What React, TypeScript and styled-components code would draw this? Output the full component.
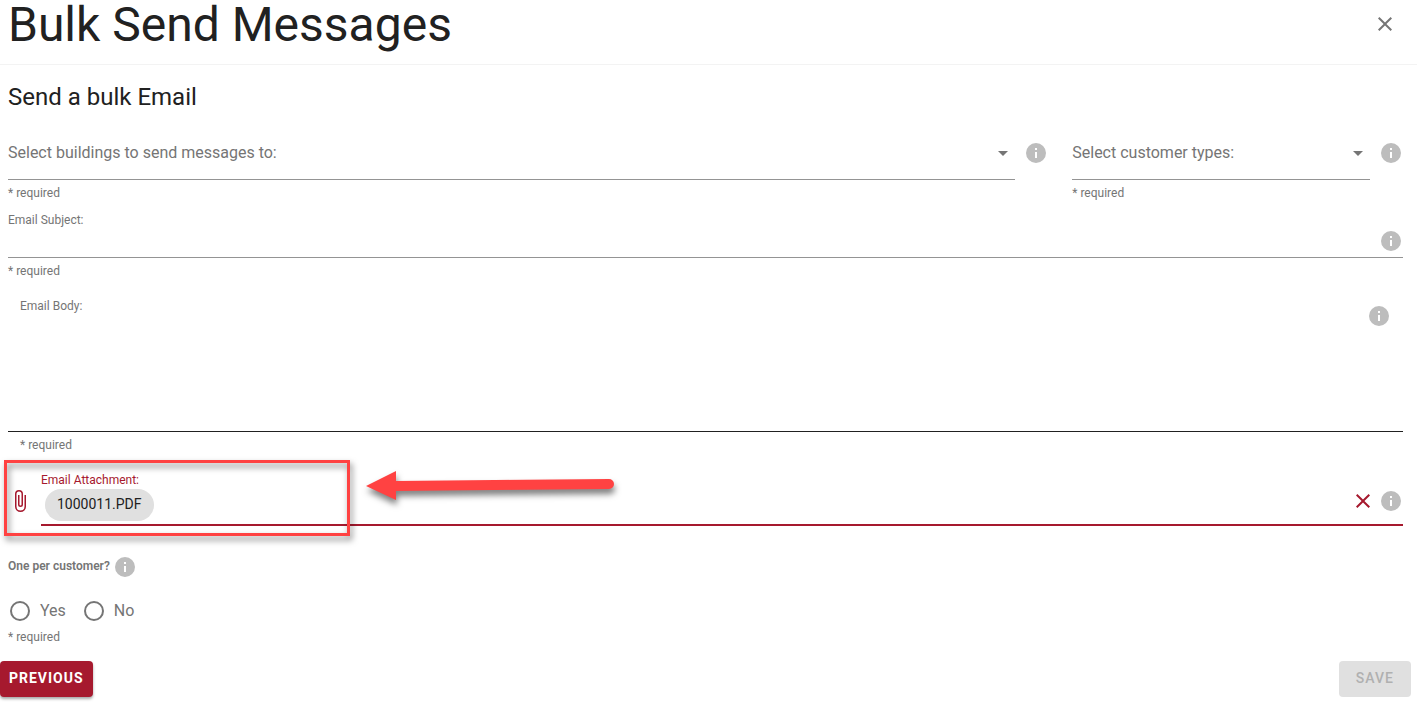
import React, { useState } from "react";
import styled, { createGlobalStyle, css } from "styled-components";

const color = {
  brand: "#a6192e",
  text: "#212121",
  muted: "#757575",
  line: "#949494",
  info: "#bdbdbd",
  chip: "#e0e0e0",
  callout: "#ff4242",
};

const GlobalStyle = createGlobalStyle`
  *, *::before, *::after { box-sizing: border-box; }
  body {
    margin: 0;
    background: #fff;
    color: ${color.text};
    font-family: Roboto, "Liberation Sans", sans-serif;
    font-size: 16px;
    line-height: 24px;
  }
  button, input, select, textarea { font: inherit; color: inherit; }
`;

const Header = styled.header`
  display: flex;
  align-items: flex-start;
  justify-content: space-between;
  padding: 0 20px 8px 8px;
  border-bottom: 1px solid #f3f3f3;
`;

const Title = styled.h1`
  margin: 0;
  padding-bottom: 6px;
  font-size: 48px;
  font-weight: 400;
  line-height: 50px;
`;

const IconButton = styled.button<{ $tone?: string }>`
  display: flex;
  padding: 0;
  border: 0;
  background: none;
  color: ${(p) => p.$tone ?? color.muted};
  cursor: pointer;
`;

const CloseButton = styled(IconButton)`
  margin-top: 12px;
`;

const Form = styled.form`
  padding-top: 16px;
`;

const Fields = styled.div`
  padding: 0 14px 0 8px;
`;

const Heading = styled.h2`
  margin: 0 0 13px;
  font-size: 24px;
  font-weight: 400;
  line-height: 32px;
`;

const Columns = styled.div`
  display: grid;
  grid-template-columns: repeat(12, 1fr);
  column-gap: 24px;
`;

const Column = styled.div<{ $span: number }>`
  grid-column: span ${(p) => p.$span};
  display: flex;
  gap: 9px;
`;

const Grow = styled.div`
  flex: 1;
  min-width: 0;
`;

const SelectBox = styled.div`
  position: relative;
  display: flex;
`;

const Select = styled.select`
  flex: 1;
  min-width: 0;
  height: 54px;
  padding: 0 24px 0 0;
  border: 0;
  border-bottom: 1px solid ${color.line};
  border-radius: 0;
  appearance: none;
  background: none;
  color: ${color.muted};
  outline: none;
`;

const Caret = styled.span`
  position: absolute;
  top: 15px;
  right: 0;
  display: flex;
  color: ${color.muted};
  pointer-events: none;
`;

const InfoSlot = styled.span`
  display: flex;
  padding-top: 15px;
`;

const smallText = css`
  font-size: 12px;
  line-height: 16px;
  color: ${color.muted};
`;

const Hint = styled.p`
  ${smallText}
  margin: 5px 0 0;
`;

const Label = styled.label<{ $active?: boolean }>`
  ${smallText}
  display: block;
  ${(p) => p.$active && `color: ${color.brand};`}
`;

const SubjectField = styled.div`
  margin-top: 11px;
`;

const SubjectRow = styled.div`
  display: flex;
  align-items: center;
  height: 30px;
  padding-bottom: 4px;
  border-bottom: 1px solid ${color.line};
`;

const TextInput = styled.input`
  flex: 1;
  min-width: 0;
  height: 24px;
  padding: 0;
  border: 0;
  background: none;
  outline: none;
`;

const BodyField = styled.div`
  margin-top: 19px;
`;

const BodyRow = styled.div`
  display: flex;
  align-items: flex-start;
  padding: 0 12px;
  border-bottom: 1px solid ${color.text};
`;

const BodyInput = styled.textarea`
  display: block;
  width: 100%;
  height: 117px;
  padding: 0;
  border: 0;
  background: none;
  outline: none;
  resize: none;
`;

const BodyInfo = styled.span`
  display: flex;
  padding-top: 6px;
`;

const BodyHint = styled(Hint)`
  padding-left: 12px;
`;

const AttachmentField = styled.div`
  position: relative;
  display: flex;
  gap: 9px;
  margin-top: 19px;
`;

const ClipButton = styled(IconButton)`
  align-self: flex-start;
  margin-top: 17px;
`;

const AttachmentRow = styled.div`
  display: flex;
  align-items: flex-start;
  gap: 16px;
  padding: 1px 0 3px 4px;
  border-bottom: 2px solid ${color.brand};
`;

const Chip = styled.span`
  margin-right: auto;
  padding: 0 12px 2px;
  border-radius: 16px;
  background: ${color.chip};
  font-size: 14px;
  line-height: 30px;
`;

const Actions = styled.span`
  display: flex;
  gap: 4px;
`;

const Callout = styled.span`
  position: absolute;
  top: -12px;
  left: -4px;
  width: 346px;
  height: 76px;
  border: 3px solid ${color.callout};
  filter: drop-shadow(2px 4px 3px rgba(0, 0, 0, 0.5));
  pointer-events: none;
`;

const Arrow = styled.svg`
  position: absolute;
  top: -7px;
  left: 352px;
  overflow: visible;
  filter: drop-shadow(1px 5px 3px rgba(0, 0, 0, 0.5));
  pointer-events: none;
`;

const RadioField = styled.fieldset`
  margin: 29px 0 0;
  padding: 0;
  border: 0;
`;

const Legend = styled.legend`
  display: flex;
  align-items: flex-start;
  gap: 3px;
  padding: 0;
  font-size: 12px;
  font-weight: 600;
  line-height: 22px;
  color: ${color.muted};
`;

const RadioRow = styled.div`
  display: flex;
  gap: 16px;
  padding: 20px 0 1px;
`;

const RadioLabel = styled.label`
  display: flex;
  align-items: center;
  gap: 10px;
  color: ${color.muted};
  cursor: pointer;
`;

const Radio = styled.input`
  display: grid;
  place-content: center;
  width: 20px;
  height: 20px;
  margin: 2px 0 2px 2px;
  border: 2px solid ${color.muted};
  border-radius: 50%;
  appearance: none;

  &:checked::before {
    content: "";
    width: 10px;
    height: 10px;
    border-radius: 50%;
    background: ${color.muted};
  }
`;

const Footer = styled.footer`
  display: flex;
  justify-content: space-between;
  padding: 16px 6px 6px 0;
`;

const Button = styled.button<{ $primary?: boolean }>`
  height: 36px;
  padding: 0 ${(p) => (p.$primary ? 9 : 17)}px 2px;
  border: 0;
  border-radius: 4px;
  font-size: 14px;
  font-weight: ${(p) => (p.$primary ? 700 : 500)};
  letter-spacing: 1px;
  text-transform: uppercase;
  background: ${(p) => (p.$primary ? color.brand : color.chip)};
  color: ${(p) => (p.$primary ? "#fff" : "#b0b0b0")};
  ${(p) => p.$primary && "box-shadow: 0 2px 3px rgba(0, 0, 0, 0.35);"}
`;

const paths = {
  close:
    "M19,6.41L17.59,5L12,10.59L6.41,5L5,6.41L10.59,12L5,17.59L6.41,19L12,13.41L17.59,19L19,17.59L13.41,12L19,6.41Z",
  info: "M13,9H11V7H13M13,17H11V11H13M12,2A10,10 0 0,0 2,12A10,10 0 0,0 12,22A10,10 0 0,0 22,12A10,10 0 0,0 12,2Z",
  caret: "M7,10L12,15L17,10H7Z",
  clip: "M16.5,6V17.5A4,4 0 0,1 12.5,21.5A4,4 0 0,1 8.5,17.5V5A2.5,2.5 0 0,1 11,2.5A2.5,2.5 0 0,1 13.5,5V15.5A1,1 0 0,1 12.5,16.5A1,1 0 0,1 11.5,15.5V6H10V15.5A2.5,2.5 0 0,0 12.5,18A2.5,2.5 0 0,0 15,15.5V5A4,4 0 0,0 11,1A4,4 0 0,0 7,5V17.5A5.5,5.5 0 0,0 12.5,23A5.5,5.5 0 0,0 18,17.5V6H16.5Z",
};

function Icon({ name }: { name: keyof typeof paths }) {
  return (
    <svg width="24" height="24" viewBox="0 0 24 24" fill="currentColor" aria-hidden="true">
      <path d={paths[name]} />
    </svg>
  );
}

function Info({ topic }: { topic: string }) {
  return (
    <IconButton type="button" $tone={color.info} aria-label={`About ${topic}`}>
      <Icon name="info" />
    </IconButton>
  );
}

function SelectField({ label, span, topic }: { label: string; span: number; topic: string }) {
  return (
    <Column $span={span}>
      <Grow>
        <SelectBox>
          <Select aria-label={label} defaultValue="" required>
            <option value="">{label}</option>
          </Select>
          <Caret>
            <Icon name="caret" />
          </Caret>
        </SelectBox>
        <Hint>* required</Hint>
      </Grow>
      <InfoSlot>
        <Info topic={topic} />
      </InfoSlot>
    </Column>
  );
}

export default function App() {
  const [choice, setChoice] = useState("");

  return (
    <>
      <GlobalStyle />
      <Header>
        <Title>Bulk Send Messages</Title>
        <CloseButton type="button" aria-label="Close">
          <Icon name="close" />
        </CloseButton>
      </Header>
      <Form onSubmit={(e) => e.preventDefault()}>
        <Fields>
          <Heading>Send a bulk Email</Heading>
          <Columns>
            <SelectField label="Select buildings to send messages to:" span={9} topic="buildings" />
            <SelectField label="Select customer types:" span={3} topic="customer types" />
          </Columns>

          <SubjectField>
            <Label htmlFor="subject">Email Subject:</Label>
            <SubjectRow>
              <TextInput id="subject" type="text" />
              <Info topic="email subject" />
            </SubjectRow>
            <Hint>* required</Hint>
          </SubjectField>

          <BodyField>
            <BodyRow>
              <Grow>
                <Label htmlFor="body">Email Body:</Label>
                <BodyInput id="body" />
              </Grow>
              <BodyInfo>
                <Info topic="email body" />
              </BodyInfo>
            </BodyRow>
            <BodyHint>* required</BodyHint>
          </BodyField>

          <AttachmentField>
            <ClipButton type="button" id="attachment" $tone={color.brand}>
              <Icon name="clip" />
            </ClipButton>
            <Grow>
              <Label htmlFor="attachment" $active>
                Email Attachment:
              </Label>
              <AttachmentRow>
                <Chip>1000011.PDF</Chip>
                <Actions>
                  <IconButton type="button" $tone={color.brand} aria-label="Remove attachment">
                    <Icon name="close" />
                  </IconButton>
                  <Info topic="email attachment" />
                </Actions>
              </AttachmentRow>
            </Grow>
            <Callout />
            <Arrow width="256" height="42" viewBox="0 0 256 42" aria-hidden="true">
              <path
                d="M6 21 L36 6 V16 L249 14 A5 5 0 0 1 249 24 L36 26 V35 Z"
                fill={color.callout}
              />
            </Arrow>
          </AttachmentField>

          <RadioField>
            <Legend>
              One per customer?
              <Info topic="one per customer" />
            </Legend>
            <RadioRow>
              {["Yes", "No"].map((option) => (
                <RadioLabel key={option}>
                  <Radio
                    type="radio"
                    name="one-per-customer"
                    value={option}
                    checked={choice === option}
                    onChange={() => setChoice(option)}
                  />
                  {option}
                </RadioLabel>
              ))}
            </RadioRow>
            <Hint>* required</Hint>
          </RadioField>
        </Fields>
        <Footer>
          <Button type="button" $primary>
            Previous
          </Button>
          <Button type="submit" disabled>
            Save
          </Button>
        </Footer>
      </Form>
    </>
  );
}
